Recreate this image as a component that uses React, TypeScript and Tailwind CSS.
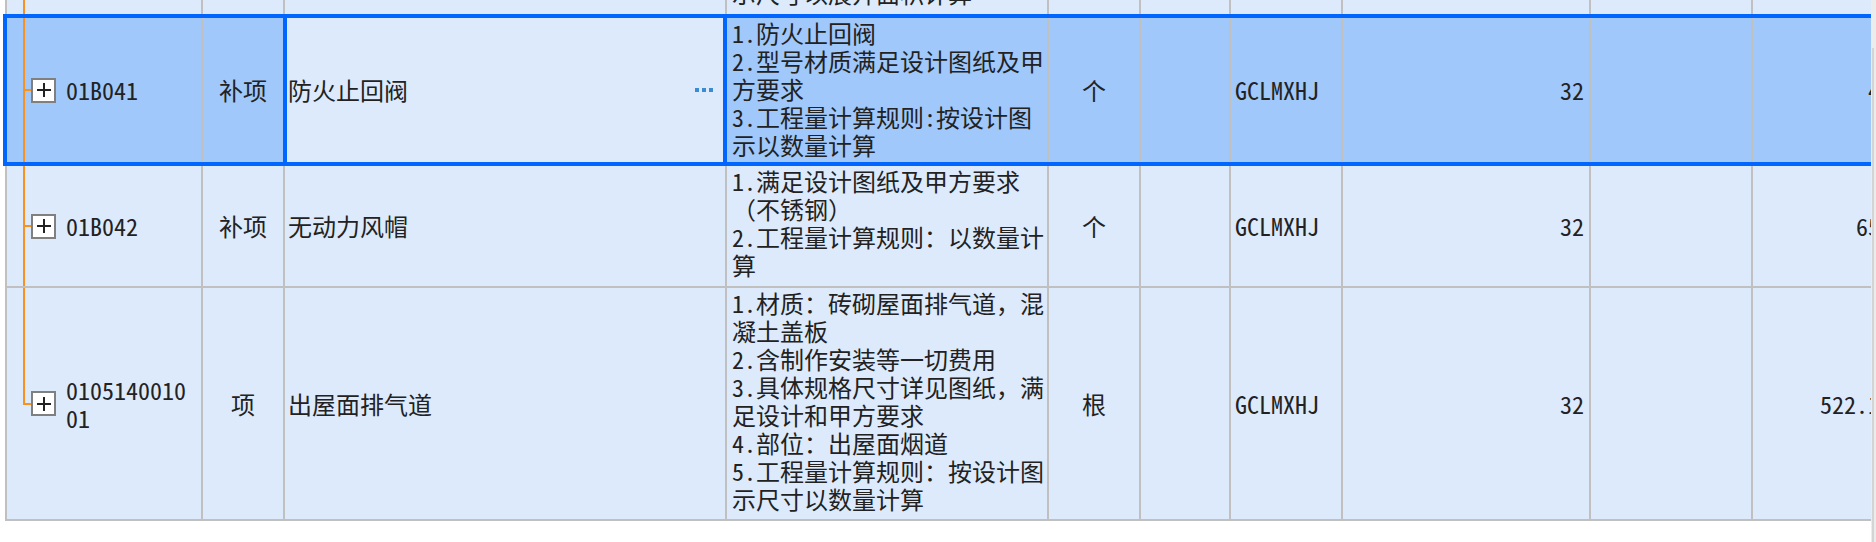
import React from 'react';

type Item = {
  code: string;
  kind: string;
  name: string;
  desc: string[];
  unit: string;
  qty: string;
  price: string;
  h: string;
  selected?: boolean;
  last?: boolean;
};

const items: Item[] = [
  {
    code: '01B041',
    kind: '补项',
    name: '防火止回阀',
    desc: ['1.防火止回阀', '2.型号材质满足设计图纸及甲方要求', '3.工程量计算规则:按设计图示以数量计算'],
    unit: '个',
    qty: '32',
    price: '45',
    h: 'h-[152px]',
    selected: true,
  },
  {
    code: '01B042',
    kind: '补项',
    name: '无动力风帽',
    desc: ['1.满足设计图纸及甲方要求（不锈钢）', '2.工程量计算规则：以数量计算'],
    unit: '个',
    qty: '32',
    price: '650',
    h: 'h-[122px]',
  },
  {
    code: '010514001001',
    kind: '项',
    name: '出屋面排气道',
    desc: [
      '1.材质：砖砌屋面排气道，混凝土盖板',
      '2.含制作安装等一切费用',
      '3.具体规格尺寸详见图纸，满足设计和甲方要求',
      '4.部位：出屋面烟道',
      '5.工程量计算规则：按设计图示尺寸以数量计算',
    ],
    unit: '根',
    qty: '32',
    price: '522.16',
    h: 'h-[233px]',
    last: true,
  },
];

function PlusBox() {
  return (
    <div className="flex size-[25px] shrink-0 items-center justify-center self-center border-2 border-[#808080] bg-white">
      <svg width="14" height="14" viewBox="0 0 14 14">
        <path d="M0 7h14M7 0v14" stroke="#222" strokeWidth="2" />
      </svg>
    </div>
  );
}

function TreeGutter({ last, branch = true }: { last?: boolean; branch?: boolean }) {
  return (
    <div className="flex w-[24px] shrink-0 flex-col">
      <div className="ml-[16px] flex-1 border-l-2 border-[#f7911f]" />
      {branch && <div className="ml-[16px] h-[2px] w-[8px] bg-[#f7911f]" />}
      <div className={`ml-[16px] flex-1 ${last ? '' : 'border-l-2 border-[#f7911f]'}`} />
    </div>
  );
}

function Row({ it }: { it: Item }) {
  const line = 'border-r-2 border-[#c0c0c0]';
  return (
    <div
      className={`flex shrink-0 ${it.h} ${
        it.selected
          ? 'ml-[3px] border-y-4 border-l-4 border-[#0066ff] bg-[#a0c8fa]'
          : 'ml-[5px] border-b-2 border-l-2 border-[#c0c0c0] bg-[#ddeafc]'
      }`}
    >
      <div className={`flex w-[196px] shrink-0 ${line}`}>
        <TreeGutter last={it.last} />
        <PlusBox />
        <div className="ml-[10px] flex-1 self-center pr-[10px] break-all">{it.code}</div>
      </div>
      <div
        className={`flex shrink-0 items-center justify-center ${
          it.selected ? 'w-[80px]' : `w-[82px] ${line}`
        }`}
      >
        {it.kind}
      </div>
      <div
        className={`flex shrink-0 items-center ${
          it.selected
            ? 'w-[444px] border-x-4 border-[#0066ff] bg-[#ddeafc] pl-[1px]'
            : `w-[442px] pl-[3px] ${line}`
        }`}
      >
        <span>{it.name}</span>
        {it.selected && (
          <div className="mr-[10px] ml-auto flex gap-[3px]">
            <span className="size-[4px] bg-[#3b8bd0]" />
            <span className="size-[4px] bg-[#3b8bd0]" />
            <span className="size-[4px] bg-[#3b8bd0]" />
          </div>
        )}
      </div>
      <div className={`w-[322px] shrink-0 pt-[1px] pl-[5px] ${line}`}>
        {it.desc.map((d) => (
          <div key={d}>{d}</div>
        ))}
      </div>
      <div className={`flex w-[92px] shrink-0 items-center justify-center ${line}`}>{it.unit}</div>
      <div className={`w-[90px] shrink-0 ${line}`} />
      <div className={`flex w-[112px] shrink-0 items-center pl-[4px] ${line}`}>GCLMXHJ</div>
      <div className={`flex w-[248px] shrink-0 items-center justify-end pr-[5px] ${line}`}>{it.qty}</div>
      <div className={`w-[162px] shrink-0 ${line}`} />
      <div className={`flex w-[146px] shrink-0 items-center justify-end pr-[5px] ${line}`}>{it.price}</div>
    </div>
  );
}

function TopRow() {
  const line = 'border-r-2 border-[#c0c0c0]';
  return (
    <div className="ml-[5px] flex h-[14px] shrink-0 overflow-hidden border-l-2 border-[#c0c0c0] bg-[#ddeafc]">
      <div className={`flex w-[196px] shrink-0 ${line}`}>
        <TreeGutter branch={false} />
      </div>
      <div className={`w-[82px] shrink-0 ${line}`} />
      <div className={`w-[442px] shrink-0 ${line}`} />
      <div className={`flex w-[322px] shrink-0 flex-col justify-end overflow-hidden pb-[7px] pl-[5px] ${line}`}>
        <div>示尺寸以展开面积计算</div>
      </div>
      <div className={`w-[92px] shrink-0 ${line}`} />
      <div className={`w-[90px] shrink-0 ${line}`} />
      <div className={`w-[112px] shrink-0 ${line}`} />
      <div className={`w-[248px] shrink-0 ${line}`} />
      <div className={`w-[162px] shrink-0 ${line}`} />
      <div className={`w-[146px] shrink-0 ${line}`} />
    </div>
  );
}

export default function App() {
  return (
    <div className="flex h-[542px] w-[1876px] bg-white font-['Noto_Sans_Mono_CJK_SC','Noto_Sans_CJK_SC',monospace] text-[24px] leading-[28px] text-[#222]">
      <div className="flex w-[1871px] flex-col overflow-hidden">
        <TopRow />
        {items.map((it) => (
          <Row key={it.code} it={it} />
        ))}
      </div>
      <div className="flex w-[5px] flex-col bg-[#ececec]">
        <div className="mt-[48px] ml-[1px] w-[2px] flex-1 bg-[#d4d4d4]" />
      </div>
    </div>
  );
}
